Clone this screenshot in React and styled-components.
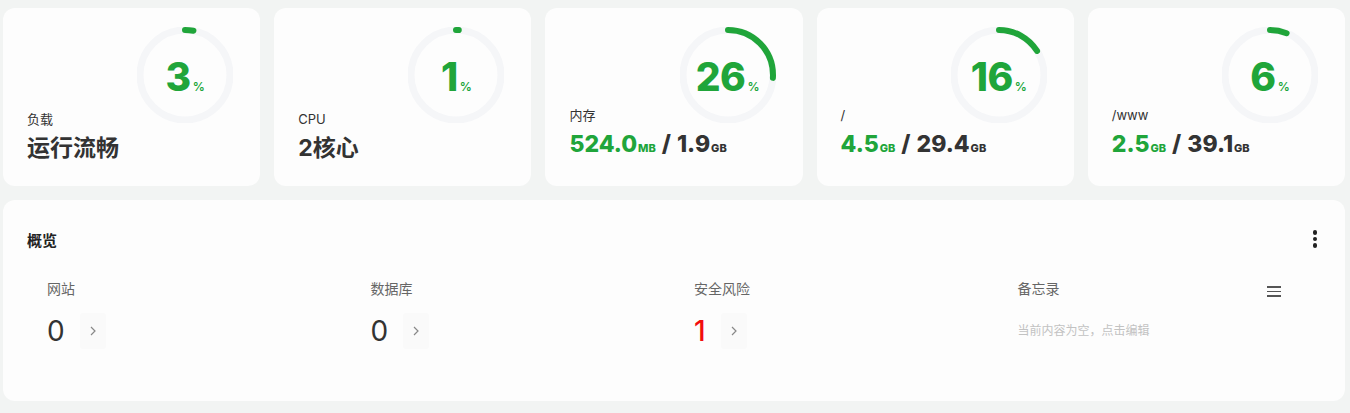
import styled, { createGlobalStyle } from "styled-components";

const GlobalStyle = createGlobalStyle`
  html, body {
    margin: 0;
    padding: 0;
    background: #f2f4f3;
  }
  body {
    font-family: Inter, "Noto Sans CJK SC", sans-serif;
    color: #333;
  }
`;

const GREEN = "#20a53a";

const Page = styled.div`
  padding: 8px 5px 12px 3px;
  display: flex;
  flex-direction: column;
  gap: 14px;
`;

const Cards = styled.div`
  display: grid;
  grid-template-columns: repeat(5, 1fr);
  gap: 14px;
`;

const Card = styled.div`
  height: 178px;
  box-sizing: border-box;
  padding: 19px 27px 23px 24px;
  background: #fdfdfd;
  border-radius: 12px;
  display: grid;
  grid-template-areas: "stack";
`;

const RingWrap = styled.div`
  grid-area: stack;
  justify-self: end;
  align-self: start;
  width: 96px;
  height: 96px;
  display: grid;
  place-items: center;
  & > * {
    grid-area: 1 / 1;
  }
  & svg {
    transform: rotate(-90deg);
  }
`;

const Percent = styled.div`
  font-size: 39px;
  font-weight: 800;
  color: ${GREEN};
  line-height: 1;
  letter-spacing: -0.5px;
  margin-top: 3px;
  & small {
    font-size: 12px;
    font-weight: 600;
    margin-left: 2px;
    letter-spacing: 0;
  }
`;

const Info = styled.div`
  grid-area: stack;
  align-self: end;
  display: flex;
  flex-direction: column;
  gap: 5px;
`;

const Label = styled.div`
  font-size: 13px;
  line-height: 18px;
  color: #333;
`;

const Value = styled.div`
  font-size: ${(p) => (p.$cjk ? "23px" : "23px")};
  font-weight: ${(p) => (p.$cjk ? 700 : 800)};
  line-height: 30px;
  color: #333;
  white-space: nowrap;
`;

const Num = styled.span`
  color: ${(p) => (p.$green ? GREEN : "#333")};
  & small {
    font-size: 11px;
    font-weight: 800;
    margin-left: 1px;
  }
`;

const Slash = styled.span`
  margin: 0 6px;
  color: #333;
`;

function Ring({ percent }) {
  const r = 45;
  const c = 2 * Math.PI * r;
  const len = (percent / 100) * c;
  return (
    <RingWrap>
      <svg width="96" height="96" viewBox="0 0 96 96">
        <circle cx="48" cy="48" r={r} fill="none" stroke="#f5f6f8" strokeWidth="7" />
        <circle
          cx="48"
          cy="48"
          r={r}
          fill="none"
          stroke={GREEN}
          strokeWidth="6"
          strokeLinecap="round"
          strokeDasharray={`${len} ${c}`}
        />
      </svg>
      <Percent>
        {percent}
        <small>%</small>
      </Percent>
    </RingWrap>
  );
}

const Panel = styled.div`
  background: #fdfdfd;
  border-radius: 12px;
  padding: 20px 24px 24px 24px;
  height: 201px;
  box-sizing: border-box;
`;

const PanelHead = styled.div`
  height: 38px;
  display: flex;
  align-items: center;
  justify-content: space-between;
  & h3 {
    margin: 0;
    font-size: 15px;
    font-weight: 700;
    color: #222;
  }
`;

const Kebab = styled.div`
  width: 16px;
  display: flex;
  flex-direction: column;
  align-items: center;
  gap: 2px;
  margin-right: -2px;
  & span {
    width: 4.5px;
    height: 4.5px;
    border-radius: 50%;
    background: #222;
  }
`;

const Stats = styled.div`
  display: grid;
  grid-template-columns: repeat(4, 1fr);
  margin-top: 21px;
`;

const Stat = styled.div`
  padding-left: 20px;
  display: flex;
  flex-direction: column;
  gap: 13px;
`;

const StatLabel = styled.div`
  font-size: 14px;
  line-height: 20px;
  color: #666;
`;

const StatRow = styled.div`
  display: flex;
  align-items: center;
  height: 38px;
`;

const StatNum = styled.span`
  font-size: 28px;
  font-weight: ${(p) => (p.$danger ? 500 : 400)};
  color: ${(p) => (p.$danger ? "#f20d0d" : "#333")};
  line-height: 1;
`;

const Arrow = styled.div`
  width: 26px;
  height: 36px;
  margin-left: 15px;
  background: #fafafa;
  border-radius: 3px;
  display: grid;
  place-items: center;
`;

const MemoHead = styled.div`
  display: flex;
  justify-content: space-between;
  align-items: flex-start;
  padding-right: 40px;
`;

const Burger = styled.div`
  margin-top: 7px;
  width: 14px;
  display: flex;
  flex-direction: column;
  gap: 3px;
  & span {
    height: 1.5px;
    background: #555;
  }
`;

const Hint = styled.div`
  font-size: 12px;
  color: #c2c2c2;
  line-height: 38px;
`;

function Chevron() {
  return (
    <Arrow>
      <svg width="6" height="10" viewBox="0 0 6 10">
        <polyline points="1,1 5,5 1,9" fill="none" stroke="#888" strokeWidth="1.2" />
      </svg>
    </Arrow>
  );
}

const cards = [
  { pct: 3, label: "负载", cjk: true, text: "运行流畅" },
  { pct: 1, label: "CPU", cjk: true, text: "2核心" },
  { pct: 26, label: "内存", used: ["524.0", "MB"], total: ["1.9", "GB"] },
  { pct: 16, label: "/", used: ["4.5", "GB"], total: ["29.4", "GB"] },
  { pct: 6, label: "/www", used: ["2.5", "GB"], total: ["39.1", "GB"] },
];

export default function App() {
  return (
    <>
      <GlobalStyle />
      <Page>
        <Cards>
          {cards.map((c) => (
            <Card key={c.label}>
              <Ring percent={c.pct} />
              <Info>
                <Label>{c.label}</Label>
                {c.text ? (
                  <Value $cjk>{c.text}</Value>
                ) : (
                  <Value>
                    <Num $green>
                      {c.used[0]}
                      <small>{c.used[1]}</small>
                    </Num>
                    <Slash>/</Slash>
                    <Num>
                      {c.total[0]}
                      <small>{c.total[1]}</small>
                    </Num>
                  </Value>
                )}
              </Info>
            </Card>
          ))}
        </Cards>
        <Panel>
          <PanelHead>
            <h3>概览</h3>
            <Kebab>
              <span />
              <span />
              <span />
            </Kebab>
          </PanelHead>
          <Stats>
            <Stat>
              <StatLabel>网站</StatLabel>
              <StatRow>
                <StatNum>0</StatNum>
                <Chevron />
              </StatRow>
            </Stat>
            <Stat>
              <StatLabel>数据库</StatLabel>
              <StatRow>
                <StatNum>0</StatNum>
                <Chevron />
              </StatRow>
            </Stat>
            <Stat>
              <StatLabel>安全风险</StatLabel>
              <StatRow>
                <StatNum $danger>1</StatNum>
                <Chevron />
              </StatRow>
            </Stat>
            <Stat>
              <MemoHead>
                <StatLabel>备忘录</StatLabel>
                <Burger>
                  <span />
                  <span />
                  <span />
                </Burger>
              </MemoHead>
              <Hint>当前内容为空，点击编辑</Hint>
            </Stat>
          </Stats>
        </Panel>
      </Page>
    </>
  );
}
